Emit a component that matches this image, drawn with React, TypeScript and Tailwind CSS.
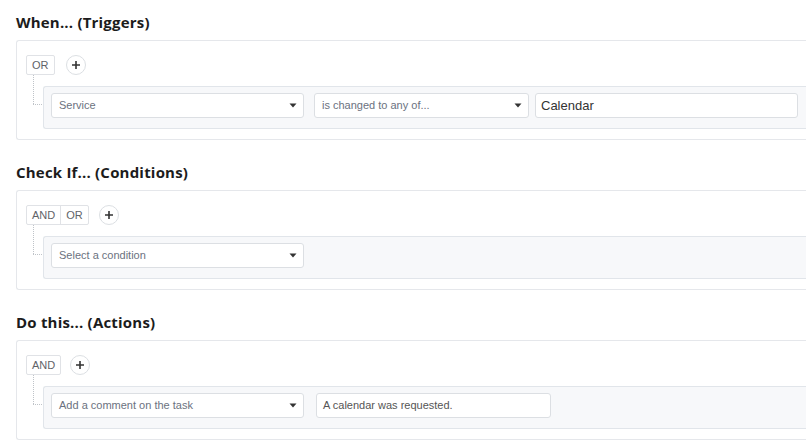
import React from "react";

const Caret = () => (
  <svg width="8" height="5" viewBox="0 0 8 5" className="shrink-0">
    <path d="M0.5 0.5 L7.5 0.5 L4 4.5 Z" fill="#333" />
  </svg>
);

const Plus = () => (
  <div className="w-[20px] h-[20px] rounded-full border border-[#dcdfe3] bg-white flex items-center justify-center">
    <svg width="10" height="10" viewBox="0 0 10 10">
      <path d="M5 1 V9 M1 5 H9" stroke="#333" strokeWidth="1.6" />
    </svg>
  </div>
);

const Select = ({ text, w }: { text: string; w: string }) => (
  <div
    className={`${w} h-[25px] shrink-0 bg-white border border-[#dcdfe3] rounded-[3px] flex items-center justify-between pl-[7px] pr-[6px] text-[11px] text-[#6b7280]`}
  >
    <span>{text}</span>
    <Caret />
  </div>
);

const Section = ({
  title,
  ops,
  children,
  plusGap,
}: {
  title: string;
  ops: string[];
  children: React.ReactNode;
  plusGap: string;
}) => (
  <div className="flex flex-col">
    <h2 className="h-[24px] leading-[24px] text-[15px] font-bold text-[#1c1c1c] [font-family:'Open_Sans','Noto_Sans',sans-serif] tracking-[0.2px]">
      {title}
    </h2>
    <div className="mt-[6px] h-[100px] border border-r-0 border-[#e5e7eb] rounded-l-[3px] pt-[14px] pl-[9px] flex flex-col">
      <div className={`flex items-center ${plusGap}`}>
        <div className="flex h-[20px] border border-[#e0e2e6] rounded-[2px] bg-white text-[11px] text-[#5f6368]">
          {ops.map((o, i) => (
            <div
              key={o}
              className={`px-[5px] flex items-center ${i > 0 ? "border-l border-[#e0e2e6]" : ""}`}
            >
              {o}
            </div>
          ))}
        </div>
        <Plus />
      </div>
      <div className="flex">
        <div className="w-[8px] shrink-0 relative">
          <div className="absolute left-[7px] top-0 h-[29px] border-l border-dotted border-[#bfc3c8]" />
          <div className="absolute left-[7px] top-[29px] w-[9px] border-t border-dotted border-[#bfc3c8]" />
        </div>
        <div className="mt-[11px] ml-[9px] flex-1 h-[43px] bg-[#f7f8fa] border border-r-0 border-[#e1e5ea] rounded-l-[3px] pl-[7px] pt-[6px] flex">
          {children}
        </div>
      </div>
    </div>
  </div>
);

export default function App() {
  return (
    <div className="w-[806px] h-[446px] overflow-hidden bg-white pl-[16px] pt-[10px] flex flex-col gap-[20px] [font-family:'Liberation_Sans',Arial,sans-serif]">
      <Section title="When... (Triggers)" ops={["OR"]} plusGap="gap-[11px]">
        <Select text="Service" w="w-[253px]" />
        <div className="ml-[10px]">
          <Select text="is changed to any of..." w="w-[215px]" />
        </div>
        <div className="ml-[6px] w-[263px] h-[25px] shrink-0 bg-white border border-[#dcdfe3] rounded-[3px] flex items-center pl-[5px] text-[13px] text-[#333]">
          Calendar
        </div>
      </Section>
      <Section title="Check If... (Conditions)" ops={["AND", "OR"]} plusGap="gap-[10px]">
        <Select text="Select a condition" w="w-[253px]" />
      </Section>
      <Section title="Do this... (Actions)" ops={["AND"]} plusGap="gap-[9px]">
        <Select text="Add a comment on the task" w="w-[253px]" />
        <div className="ml-[12px] w-[235px] h-[25px] shrink-0 bg-white border border-[#dcdfe3] rounded-[3px] flex items-center pl-[6px] text-[11px] text-[#555]">
          A calendar was requested.
        </div>
      </Section>
    </div>
  );
}
